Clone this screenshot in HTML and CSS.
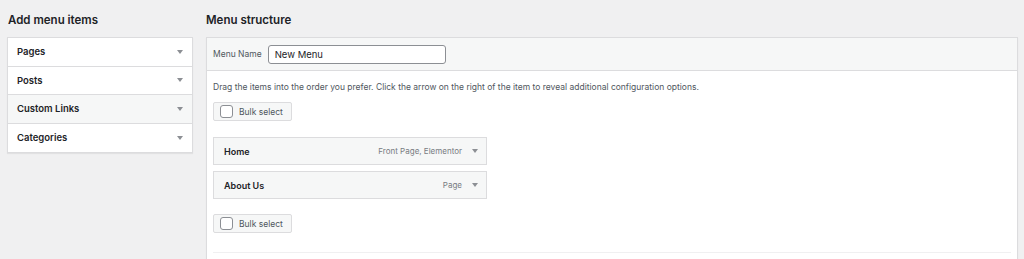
FILE: index.html
```html
<!DOCTYPE html>
<html lang="en">
<head>
    <meta charset="UTF-8">
    <meta name="viewport" content="width=device-width, initial-scale=1.0">
    <title>Menus</title>
    <link rel="stylesheet" href="styles.css">
</head>
<body>
    <div class="menus-wrap">
        <div class="menu-settings-col">
            <h2>Add menu items</h2>
            <div class="accordion">
                <div class="accordion-row">
                    <span>Pages</span>
                    <svg class="arrow" width="6" height="4" viewBox="0 0 6 4"><path d="M0 0h6L3 4z"/></svg>
                </div>
                <div class="accordion-row">
                    <span>Posts</span>
                    <svg class="arrow" width="6" height="4" viewBox="0 0 6 4"><path d="M0 0h6L3 4z"/></svg>
                </div>
                <div class="accordion-row hover">
                    <span>Custom Links</span>
                    <svg class="arrow" width="6" height="4" viewBox="0 0 6 4"><path d="M0 0h6L3 4z"/></svg>
                </div>
                <div class="accordion-row">
                    <span>Categories</span>
                    <svg class="arrow" width="6" height="4" viewBox="0 0 6 4"><path d="M0 0h6L3 4z"/></svg>
                </div>
            </div>
        </div>

        <div class="menu-edit-col">
            <h2>Menu structure</h2>
            <div class="menu-edit">
                <div class="menu-header">
                    <label for="menu-name">Menu Name</label>
                    <input type="text" id="menu-name" value="New Menu">
                </div>
                <div class="menu-body">
                    <p class="drag-instructions">Drag the items into the order you prefer. Click the arrow on the right of the item to reveal additional configuration options.</p>

                    <label class="bulk-select">
                        <span class="checkbox"></span>
                        Bulk select
                    </label>

                    <ul class="menu-items">
                        <li class="menu-item">
                            <span class="item-title">Home</span>
                            <span class="item-type">Front Page, Elementor</span>
                            <svg class="arrow" width="6" height="4" viewBox="0 0 6 4"><path d="M0 0h6L3 4z"/></svg>
                        </li>
                        <li class="menu-item">
                            <span class="item-title">About Us</span>
                            <span class="item-type">Page</span>
                            <svg class="arrow" width="6" height="4" viewBox="0 0 6 4"><path d="M0 0h6L3 4z"/></svg>
                        </li>
                    </ul>

                    <label class="bulk-select bottom">
                        <span class="checkbox"></span>
                        Bulk select
                    </label>

                    <div class="divider"></div>
                </div>
            </div>
        </div>
    </div>
</body>
</html>
```

FILE: styles.css
```css
:root {
    --bg: #f0f0f1;
    --border: #dcdcde;
    --panel-gray: #f6f7f7;
    --text: #1d2327;
    --muted: #50575e;
    --arrow: #8c8f94;
}

* {
    box-sizing: border-box;
    font-family: 'Inter', 'Liberation Sans', sans-serif;
}

body {
    margin: 0;
    background: var(--bg);
    color: var(--text);
    overflow: hidden;
}

.menus-wrap {
    display: flex;
    gap: 13px;
    padding: 0 6px 0 7px;
}

h2 {
    margin: 0;
    padding-top: 13px;
    margin-bottom: 10px;
    font-size: 11.5px;
    line-height: 14px;
    font-weight: 600;
}

.menu-settings-col {
    width: 186px;
    flex-shrink: 0;
}

.menu-settings-col h2 {
    padding-left: 1px;
}

.accordion {
    background: #fff;
    border: 1px solid var(--border);
    box-shadow: 0 1px 1px rgba(0,0,0,0.06);
}

.accordion-row {
    display: flex;
    align-items: center;
    justify-content: space-between;
    height: 28.5px;
    padding: 0 9px 0 9px;
    border-bottom: 1px solid var(--border);
    font-size: 9.5px;
    font-weight: 600;
    color: var(--text);
}

.accordion-row:last-child {
    border-bottom: none;
}

.accordion-row.hover {
    background: var(--panel-gray);
}

.arrow {
    fill: var(--arrow);
    flex-shrink: 0;
}

.menu-edit-col {
    flex-grow: 1;
}

.menu-edit {
    background: #fff;
    border: 1px solid var(--border);
    box-shadow: 0 1px 1px rgba(0,0,0,0.06);
    min-height: 260px;
}

.menu-header {
    display: flex;
    align-items: center;
    height: 33px;
    padding: 0 6px;
    background: var(--panel-gray);
    border-bottom: 1px solid var(--border);
}

.menu-header label {
    font-size: 8.5px;
    color: var(--muted);
    margin-right: 6px;
}

.menu-header input {
    width: 178px;
    height: 19px;
    padding: 0 6px;
    border: 1px solid #8c8f94;
    border-radius: 3px;
    font-size: 9.5px;
    color: var(--text);
    background: #fff;
    outline: none;
}

.menu-body {
    padding: 10px 6px 0 6px;
}

.drag-instructions {
    margin: 0;
    font-size: 8.5px;
    line-height: 12px;
    color: var(--muted);
}

.bulk-select {
    display: inline-flex;
    align-items: center;
    gap: 6px;
    height: 19px;
    margin-top: 9px;
    padding: 0 8px 0 6px;
    background: var(--panel-gray);
    border: 1px solid var(--border);
    border-radius: 2px;
    font-size: 8.5px;
    color: var(--muted);
}

.bulk-select.bottom {
    margin-top: 15px;
}

.checkbox {
    width: 13px;
    height: 13px;
    background: #fff;
    border: 1px solid #8c8f94;
    border-radius: 3px;
}

.menu-items {
    list-style: none;
    margin: 15px 0 0 0;
    padding: 0;
    width: 274px;
    display: flex;
    flex-direction: column;
    gap: 6px;
}

.menu-item {
    display: flex;
    align-items: center;
    height: 28px;
    padding: 0 8px 0 10px;
    background: var(--panel-gray);
    border: 1px solid var(--border);
}

.item-title {
    font-size: 9px;
    font-weight: 600;
    flex-grow: 1;
}

.item-type {
    font-size: 8px;
    color: #787c82;
    margin-right: 10px;
}

.divider {
    height: 1px;
    background: var(--bg);
    margin-top: 18px;
}
```
